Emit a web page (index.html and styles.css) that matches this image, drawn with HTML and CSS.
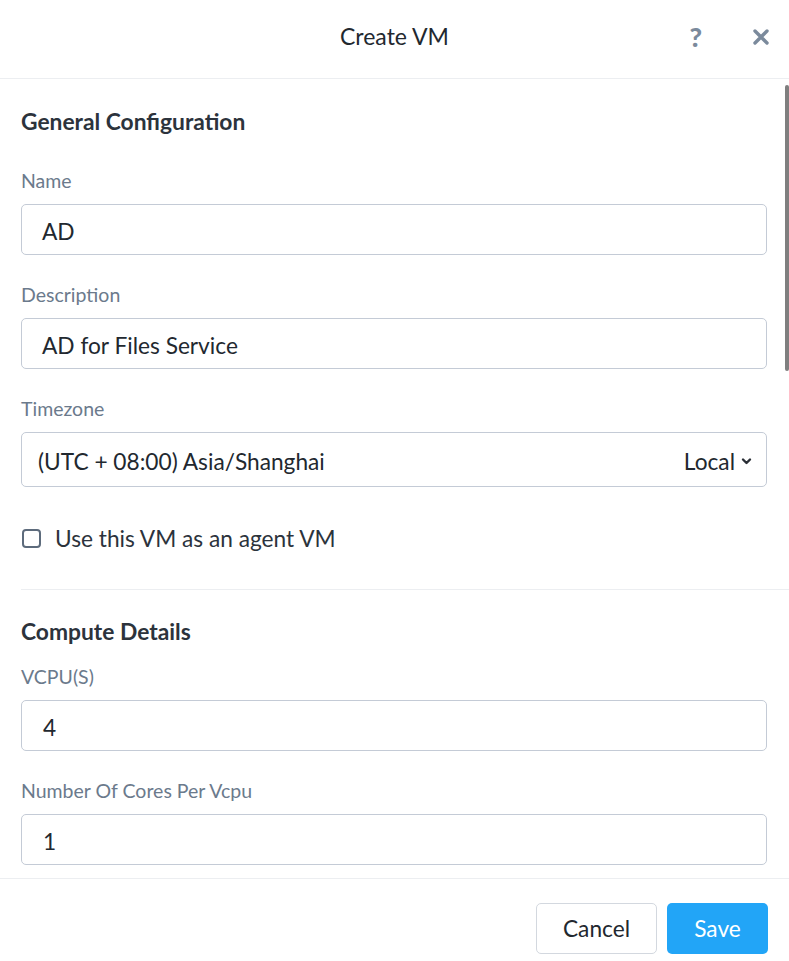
FILE: index.html
```html
<!DOCTYPE html>
<html>
<head>
<meta charset="utf-8">
<link rel="stylesheet" href="styles.css">
</head>
<body>
<div class="modal">
  <header class="head">
    <div class="title">Create VM</div>
    <div class="head-icons">
      <span class="help">?</span>
      <svg class="close" width="18" height="18" viewBox="0 0 18 18"><path d="M3 3L15 15M15 3L3 15" stroke="#7b8a9c" stroke-width="3.4" stroke-linecap="round"/></svg>
    </div>
  </header>
  <main class="body">
    <section class="section first">
      <h2 class="sec-title">General Configuration</h2>
      <div class="field">
        <label class="label">Name</label>
        <div class="input">AD</div>
      </div>
      <div class="field">
        <label class="label">Description</label>
        <div class="input">AD for Files Service</div>
      </div>
      <div class="field">
        <label class="label">Timezone</label>
        <div class="input select">
          <span>(UTC + 08:00) Asia/Shanghai</span>
          <span class="local">Local
            <svg width="11" height="8" viewBox="0 0 11 8"><path d="M2 2.5L5.5 6L9 2.5" fill="none" stroke="#2a2f36" stroke-width="2.4" stroke-linecap="round" stroke-linejoin="round"/></svg>
          </span>
        </div>
      </div>
      <div class="check-row">
        <span class="checkbox"></span>
        <span class="check-text">Use this VM as an agent VM</span>
      </div>
    </section>
    <section class="section second">
      <h2 class="sec-title">Compute Details</h2>
      <div class="field">
        <label class="label">VCPU(S)</label>
        <div class="input num">4</div>
      </div>
      <div class="field">
        <label class="label">Number Of Cores Per Vcpu</label>
        <div class="input num">1</div>
      </div>
    </section>
    <div class="scroll-thumb"></div>
  </main>
  <footer class="foot">
    <button class="btn cancel">Cancel</button>
    <button class="btn save">Save</button>
  </footer>
</div>
</body>
</html>
```
FILE: styles.css
```css
* { box-sizing: border-box; }
html, body { margin: 0; padding: 0; background: #fff; }
body { font-family: Lato, "Open Sans", sans-serif; color: #22282f; }
.modal { width: 789px; height: 961px; display: flex; flex-direction: column; overflow: hidden; }
.head { height: 79px; flex: none; border-bottom: 1px solid #eceef1; display: flex; align-items: center; justify-content: center; position: relative; padding-bottom: 6px; }
.title { font-size: 23px; line-height: 28px; color: #22282f; }
.head-icons { position: absolute; right: 19px; top: 23px; display: flex; align-items: center; gap: 50px; }
.help { font-size: 27px; font-weight: 900; color: #7b8a9c; line-height: 28px; }
.close { display: block; }
.body { flex: 1; position: relative; overflow: hidden; padding: 0 22px 0 21px; }
.section { padding-top: 30px; }
.first { border-bottom: 1px solid #eceef1; padding-bottom: 39px; margin-right: -22px; padding-right: 22px; }
.second { padding-top: 29px; }
.sec-title { margin: 0 0 37px; font-size: 22.8px; font-weight: 700; line-height: 24px; color: #2c333c; }
.second .sec-title { margin-bottom: 23px; }
.field { margin-bottom: 29px; }
.label { display: block; font-size: 19.5px; color: #6b7a8c; line-height: 22px; margin-bottom: 12px; }
.input { height: 51px; border: 1.5px solid #c4cbd6; border-radius: 5px; padding: 0 20px; display: flex; align-items: center; font-size: 22.7px; color: #22282f; padding-top: 3px; }
.input.num { padding-left: 21px; }
.select { height: 55px; justify-content: space-between; padding-left: 16px; padding-right: 14px; }
.local { display: flex; align-items: center; gap: 6px; }
.check-row { display: flex; align-items: center; gap: 14px; height: 24px; }
.field + .check-row { margin-top: 39px; }
.checkbox { width: 19px; height: 19px; border: 2px solid #5d6b7c; border-radius: 4px; margin-left: 1px; }
.check-text { font-size: 22.7px; color: #2c333c; }
.scroll-thumb { position: absolute; right: 0; top: 6px; width: 4px; height: 286px; background: #7f7f7f; border-radius: 2px; }
.foot { height: 83px; flex: none; border-top: 1px solid #eceef1; display: flex; justify-content: flex-end; align-items: flex-start; padding: 24px 21px 0 0; gap: 10px; }
.btn { height: 51px; border-radius: 5px; font-family: Lato, "Open Sans", sans-serif; font-size: 22.7px; cursor: pointer; }
.cancel { width: 121px; background: #fff; border: 1.5px solid #d3d8df; color: #22282f; }
.save { width: 101px; background: #22a5f7; border: none; color: #fff; }
```
